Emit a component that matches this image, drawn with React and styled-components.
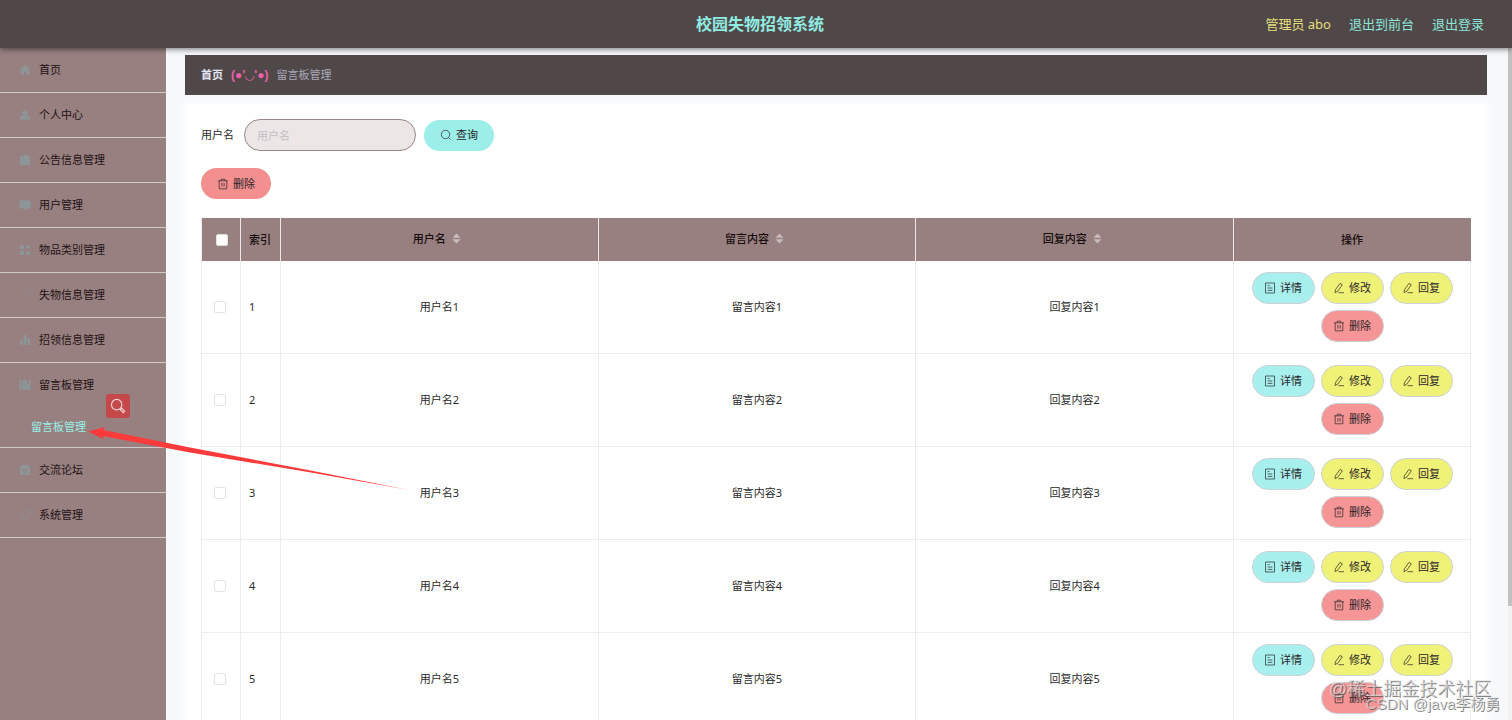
import React, { useState } from 'react';
import styled, { createGlobalStyle, css } from 'styled-components';

// --- theme values ---
const COLORS = {
  dark: '#504848',
  mauve: '#988080',
  mint: '#9cefe9',
  rose: '#f38f8f',
  lime: '#f0f277',
  line: '#ededed',
  text: '#2b2b2b',
};

const GlobalStyle = createGlobalStyle`
  *, *::before, *::after { box-sizing: border-box; }
  body {
    margin: 0;
    background: #f6f8fa;
    color: ${COLORS.text};
    font: 11px/16px 'Noto Sans', 'Noto Sans CJK SC', sans-serif;
  }
  button, input { font: inherit; }
  a { color: inherit; text-decoration: none; }
`;

const Page = styled.div`
  position: relative;
  display: flex;
  flex-direction: column;
  height: 100vh;
  overflow: hidden;
`;

// --- top bar ---
const Header = styled.header`
  display: grid;
  grid-template-columns: 1fr auto 1fr;
  align-items: center;
  flex: none;
  height: 48px;
  padding: 0 28px 0 36px;
  background: ${COLORS.dark};
  box-shadow: 0 1px 6px rgba(0, 0, 0, 0.55);
  z-index: 1;
`;

const Title = styled.h1`
  grid-column: 2;
  margin: 0;
  font-size: 16px;
  line-height: 24px;
  font-weight: 700;
  color: #90ebe2;
`;

const UserNav = styled.nav`
  display: flex;
  justify-content: flex-end;
  gap: 18px;
  font-size: 13px;
  line-height: 20px;
  color: #8ee6dc;
`;

const UserName = styled.span`
  color: #e5df7c;
`;

// --- layout ---
const Body = styled.div`
  display: grid;
  grid-template-columns: 166px minmax(0, 1fr) 4px;
  flex: 1;
  min-height: 0;
`;

const Scrollbar = styled.div`
  background: #f1f1f1;
`;

const Thumb = styled.div`
  height: 83%;
  background: #c1c1c1;
`;

// --- side menu ---
const Sidebar = styled.aside`
  background: ${COLORS.mauve};
  box-shadow: 1px 0 0 #fff;
  color: #1f1215;
`;

const MenuItem = styled.div`
  border-bottom: 1px solid #d5caca;
`;

const MenuLink = styled.a`
  display: flex;
  align-items: center;
  gap: 8px;
  height: 44px;
  padding: 0 16px 0 19px;

  svg { color: #8c9698; }
  svg:last-child:not(:first-child) { margin-left: auto; color: #a08c8c; }
`;

const SubLink = styled.a`
  display: block;
  height: 40px;
  padding-left: 31px;
  line-height: 40px;
  color: #97f0e7;
`;

// --- content ---
const Main = styled.main`
  min-width: 0;
  padding: 7px 21px 0 19px;
  overflow: hidden;
`;

const Breadcrumb = styled.nav`
  display: flex;
  align-items: center;
  gap: 8px;
  height: 40px;
  padding: 0 16px;
  background: ${COLORS.dark};
  color: #a8a9b8;
`;

const Home = styled.a`
  font-weight: 700;
  color: #e1e6f7;
`;

const Face = styled.span`
  font-family: 'Liberation Sans', 'DejaVu Sans', sans-serif;
  font-size: 12px;
  font-weight: 700;
  color: #ee5fa9;
`;

const Card = styled.section`
  margin-top: 9px;
  padding: 15px 16px;
  background: #fff;
  box-shadow: 0 0 9px #fff;
`;

const SearchForm = styled.form`
  display: flex;
  align-items: center;
  margin-bottom: 17px;
`;

const Field = styled.input`
  width: 172px;
  height: 32px;
  margin: 0 8px 0 10px;
  padding: 0 12px;
  border: 1px solid #988888;
  border-radius: 16px;
  background: #ece6e6;
  outline: none;

  &::placeholder { color: #c2bfc3; opacity: 1; }
`;

const Button = styled.button`
  display: inline-flex;
  align-items: center;
  justify-content: center;
  gap: 4px;
  width: 70px;
  height: 31px;
  padding: 0;
  border: 0;
  border-radius: 16px;
  background: ${({ $color }) => $color};
  color: #2a2528;
  cursor: pointer;

  ${({ $small }) => $small && css`
    width: 63px;
    height: 32px;
    border: 1px solid #cdd2d8;
  `}
`;

const Toolbar = styled.div`
  display: flex;
  margin-bottom: 19px;
`;

// --- table ---
const Table = styled.table`
  width: 100%;
  table-layout: fixed;
  border-collapse: separate;
  border-spacing: 0;
  border-left: 1px solid ${COLORS.line};
`;

const Th = styled.th`
  height: 43px;
  padding: 0 0 0 ${({ $left }) => $left || 0}px;
  border-right: 1px solid #eee6e6;
  background: ${COLORS.mauve};
  color: #160c0e;
  font-weight: 500;
  text-align: ${({ $left }) => ($left ? 'left' : 'center')};

  &:last-child { border-right-color: ${COLORS.mauve}; }
`;

const SortLabel = styled.span`
  display: inline-flex;
  align-items: center;
  padding-bottom: 2px;

  svg { margin: 0 5px 0 6px; color: #c8bcbf; }
`;

const Td = styled.td`
  height: 93px;
  padding: 0 0 0 ${({ $left }) => $left || 0}px;
  border-right: 1px solid ${COLORS.line};
  border-bottom: 1px solid ${COLORS.line};
  text-align: ${({ $left }) => ($left ? 'left' : 'center')};
`;

const Check = styled.input`
  appearance: none;
  display: block;
  width: 12px;
  height: 12px;
  margin: 0;
  border: 1px solid #e2e2e5;
  border-radius: 2px;
  background: #fff;

  &:checked { background: ${COLORS.mint}; }
`;

const Actions = styled.div`
  display: flex;
  flex-wrap: wrap;
  justify-content: center;
  gap: 6px;
  padding: 0 16px;
`;

// --- overlays ---
const Magnifier = styled.div`
  position: absolute;
  left: 106px;
  top: 394px;
  display: flex;
  align-items: center;
  justify-content: center;
  width: 24px;
  height: 24px;
  border-radius: 3px;
  background: #c5494b;
  color: #f0cfd0;
  z-index: 2;
`;

const Arrow = styled.svg`
  position: absolute;
  left: 88px;
  top: 424px;
  z-index: 2;
  pointer-events: none;
`;

const Watermark = styled.div`
  position: absolute;
  right: ${({ $right }) => $right}px;
  bottom: ${({ $bottom }) => $bottom}px;
  font-family: 'Liberation Sans', 'Noto Sans CJK SC', sans-serif;
  font-size: ${({ $size }) => $size}px;
  line-height: 20px;
  white-space: nowrap;
  color: rgba(225, 225, 225, 0.7);
  text-shadow: 1px 1px 0 rgba(80, 80, 80, 0.7);
  z-index: 2;
  pointer-events: none;
`;

// --- icons ---
const Svg = ({ size = 12, children, ...rest }) => (
  <svg width={size} height={size} viewBox="0 0 12 12" fill="none" stroke="currentColor" strokeWidth="0.7" aria-hidden="true" {...rest}>
    {children}
  </svg>
);

const SearchIcon = () => (
  <Svg><circle cx="5.5" cy="5.5" r="4.2" /><path d="M8.6 8.6 10.4 10.4" /></Svg>
);
const TrashIcon = () => (
  <Svg><path d="M1 2.8h10M4.2 2.8V1.2h3.6v1.6M2.2 2.8v8h7.6v-8M4.9 5v3.6M7.1 5v3.6" /></Svg>
);
const DocIcon = () => (
  <Svg><path d="M1.5 1h9v10h-9zM3.6 3.6h2M3.6 6h4.8M3.6 8.4h4.8" /></Svg>
);
const EditIcon = () => (
  <Svg><path d="M7 1.4 9.3 2.8 4.8 9.2 2 10.6 2.4 7.8zM5.4 10.7H11" strokeLinejoin="round" /></Svg>
);
const Chevron = () => (
  <Svg size={6}><path d="M2 4 6 8 10 4" /></Svg>
);
const SortIcon = () => (
  <svg width="9" height="11" viewBox="0 0 9 11" fill="currentColor" aria-hidden="true">
    <path d="M4.5 0.5 8.5 4.7h-8zM4.5 10.5.5 6.3h8z" />
  </svg>
);

const MENU_ICONS = {
  home: <path d="M6 1 11.5 6H10v5H7.3V7.5H4.7V11H2V6H.5z" />,
  user: <path d="M6 1a2.6 2.6 0 0 1 1.4 4.8c2 .6 3.8 2 3.8 4.7H.8c0-2.7 1.8-4.1 3.8-4.7A2.6 2.6 0 0 1 6 1z" />,
  clipboard: <path d="M1 2h3V1h4v1h3v9H1z" />,
  board: <path d="M.5 1.5h11v8H7V11H5V9.5H.5z" />,
  grid: <path d="M1 1h4v4H1zM7 2l2-1.5L11.5 3 9 5zM1 7h4v4H1zM7 7h4v4H7z" />,
  ring: <path d="M1 2h10v8H1zm1 1v6h8V3z" fillRule="evenodd" opacity="0.35" />,
  bars: <path d="M1 6h2.5v5H1zM4.8 1h2.5v10H4.8zM8.6 4h2.5v7H8.6z" />,
  book: <path d="M.5 1h2v10h-2zM3.5 1H8v4l1-1 1 1V1h1.5v10h-8z" />,
  chat: <path d="M2 1h8v2h1v8H1V3h1zm1 4v1h6V5zm0 2.5v1h6v-1z" fillRule="evenodd" />,
  gear: <path d="M6 1a5 5 0 1 0 0 10A5 5 0 0 0 6 1zm0 1.2a3.8 3.8 0 1 1 0 7.6 3.8 3.8 0 0 1 0-7.6z" fillRule="evenodd" opacity="0.5" />,
};

// --- data ---
const MENU = [
  { label: '首页', icon: 'home', leaf: true },
  { label: '个人中心', icon: 'user', leaf: true },
  { label: '公告信息管理', icon: 'clipboard' },
  { label: '用户管理', icon: 'board' },
  { label: '物品类别管理', icon: 'grid' },
  { label: '失物信息管理', icon: 'ring' },
  { label: '招领信息管理', icon: 'bars' },
  { label: '留言板管理', icon: 'book', children: ['留言板管理'] },
  { label: '交流论坛', icon: 'chat' },
  { label: '系统管理', icon: 'gear' },
];

const ROWS = [1, 2, 3, 4, 5].map((id) => ({
  id,
  user: `用户名${id}`,
  message: `留言内容${id}`,
  reply: `回复内容${id}`,
}));

const ACTIONS = [
  { label: '详情', color: '#a8f0ee', Icon: DocIcon },
  { label: '修改', color: COLORS.lime, Icon: EditIcon },
  { label: '回复', color: COLORS.lime, Icon: EditIcon },
  { label: '删除', color: '#f59595', Icon: TrashIcon },
];

export default function App() {
  const [selected, setSelected] = useState([]);
  const [keyword, setKeyword] = useState('');

  const toggle = (id) =>
    setSelected((prev) => (prev.includes(id) ? prev.filter((x) => x !== id) : [...prev, id]));
  const toggleAll = (e) => setSelected(e.target.checked ? ROWS.map((r) => r.id) : []);

  return (
    <Page>
      <GlobalStyle />
      <Header>
        <Title>校园失物招领系统</Title>
        <UserNav>
          <UserName>管理员 abo</UserName>
          <a href="#front">退出到前台</a>
          <a href="#logout">退出登录</a>
        </UserNav>
      </Header>

      <Body>
        <Sidebar>
          {MENU.map((item) => (
            <MenuItem key={item.label}>
              <MenuLink href="#menu">
                <Svg fill="currentColor" stroke="none">{MENU_ICONS[item.icon]}</Svg>
                <span>{item.label}</span>
                {!item.leaf && <Chevron />}
              </MenuLink>
              {item.children?.map((label) => (
                <SubLink key={label} href="#messages">{label}</SubLink>
              ))}
            </MenuItem>
          ))}
        </Sidebar>

        <Main>
          <Breadcrumb>
            <Home href="#home">首页</Home>
            <Face>(●'◡'●)</Face>
            <span>留言板管理</span>
          </Breadcrumb>

          <Card>
            <SearchForm onSubmit={(e) => e.preventDefault()}>
              <label htmlFor="username">用户名</label>
              <Field
                id="username"
                placeholder="用户名"
                value={keyword}
                onChange={(e) => setKeyword(e.target.value)}
              />
              <Button type="submit" $color={COLORS.mint}><SearchIcon />查询</Button>
            </SearchForm>
            <Toolbar>
              <Button type="button" $color={COLORS.rose}><TrashIcon />删除</Button>
            </Toolbar>

            <Table>
              <colgroup>
                <col width="39" />
                <col width="40" />
                <col />
                <col />
                <col />
                <col width="237" />
              </colgroup>
              <thead>
                <tr>
                  <Th $left={14}>
                    <Check
                      type="checkbox"
                      aria-label="全选"
                      checked={selected.length === ROWS.length}
                      onChange={toggleAll}
                    />
                  </Th>
                  <Th $left={8}>索引</Th>
                  {['用户名', '留言内容', '回复内容'].map((label) => (
                    <Th key={label}><SortLabel>{label}<SortIcon /></SortLabel></Th>
                  ))}
                  <Th>操作</Th>
                </tr>
              </thead>
              <tbody>
                {ROWS.map((row) => (
                  <tr key={row.id}>
                    <Td $left={12}>
                      <Check
                        type="checkbox"
                        aria-label={row.user}
                        checked={selected.includes(row.id)}
                        onChange={() => toggle(row.id)}
                      />
                    </Td>
                    <Td $left={8}>{row.id}</Td>
                    <Td>{row.user}</Td>
                    <Td>{row.message}</Td>
                    <Td>{row.reply}</Td>
                    <Td>
                      <Actions>
                        {ACTIONS.map(({ label, color, Icon }) => (
                          <Button key={label} type="button" $small $color={color}><Icon />{label}</Button>
                        ))}
                      </Actions>
                    </Td>
                  </tr>
                ))}
              </tbody>
            </Table>
          </Card>
        </Main>

        <Scrollbar><Thumb /></Scrollbar>
      </Body>

      <Magnifier>
        <Svg size={16} strokeWidth="0.9">
          <circle cx="5" cy="5" r="3.9" />
          <path d="M7.6 8.6 8.6 7.6 11 10 10 11z" />
        </Svg>
      </Magnifier>
      <Arrow width="324" height="70" viewBox="0 0 324 70" fill="#fb3b3b" aria-hidden="true">
        <path d="M0 7.5 17 3 15.5 6 102 23.500 220 46 321 66 220 48 102 28.500 14.500 12 16 15.500z" />
      </Arrow>
      <Watermark $size={18} $right={21} $bottom={21}>@稀土掘金技术社区</Watermark>
      <Watermark $size={15} $right={12} $bottom={6}>CSDN @java李杨勇</Watermark>
    </Page>
  );
}
